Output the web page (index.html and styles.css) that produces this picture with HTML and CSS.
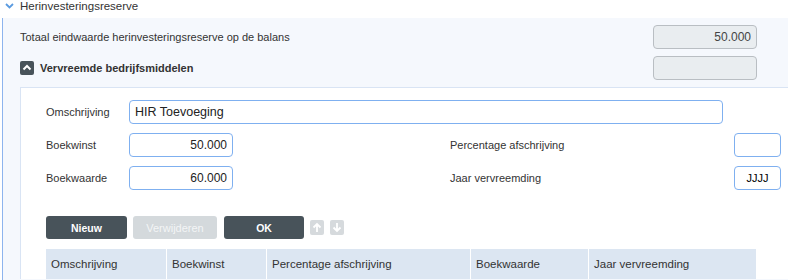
FILE: index.html
```html
<!DOCTYPE html>
<html lang="nl">
  <head>
    <meta charset="UTF-8" />
    <title>Herinvesteringsreserve</title>
    <link rel="stylesheet" href="styles.css">
  </head>
  <body>
    <div class="section-title">
      <svg class="chevron-down" width="9" height="6" viewBox="0 0 9 6">
        <path d="M1 1 L4.5 4.5 L8 1" fill="none" stroke="#5b9be0" stroke-width="1.8" />
      </svg>
      <span>Herinvesteringsreserve</span>
    </div>

    <div class="section-body">
      <div class="sum-row">
        <span class="sum-label">Totaal eindwaarde herinvesteringsreserve op de balans</span>
        <input class="field readonly" type="text" value="50.000" readonly />
      </div>
      <div class="sum-row">
        <span class="sum-label bold">
          <span class="toggle">
            <svg width="14" height="14" viewBox="0 0 14 14">
              <path d="M3.5 8.5 L7 5 L10.5 8.5" fill="none" stroke="#fff" stroke-width="2" />
            </svg>
          </span>
          Vervreemde bedrijfsmiddelen
        </span>
        <input class="field readonly" type="text" value="" readonly />
      </div>

      <div class="panel">
        <div class="form-row">
          <label class="label">Omschrijving</label>
          <input class="field wide" type="text" value="HIR Toevoeging" />
        </div>
        <div class="form-row">
          <div class="half">
            <label class="label">Boekwinst</label>
            <input class="field num" type="text" value="50.000" />
          </div>
          <label class="label right-label">Percentage afschrijving</label>
          <input class="field small" type="text" value="" />
        </div>
        <div class="form-row">
          <div class="half">
            <label class="label">Boekwaarde</label>
            <input class="field num" type="text" value="60.000" />
          </div>
          <label class="label right-label">Jaar vervreemding</label>
          <input class="field small year" type="text" value="JJJJ" />
        </div>

        <div class="buttons">
          <button class="btn btn-new">Nieuw</button>
          <button class="btn btn-delete" disabled>Verwijderen</button>
          <button class="btn btn-ok">OK</button>
          <span class="arrow">
            <svg width="14" height="15" viewBox="0 0 14 15">
              <path d="M7 12 V4 M3.5 7.5 L7 4 L10.5 7.5" fill="none" stroke="#fff" stroke-width="1.8" />
            </svg>
          </span>
          <span class="arrow">
            <svg width="14" height="15" viewBox="0 0 14 15">
              <path d="M7 3 V11 M3.5 7.5 L7 11 L10.5 7.5" fill="none" stroke="#fff" stroke-width="1.8" />
            </svg>
          </span>
        </div>

        <div class="grid-head">
          <div class="cell col-desc">Omschrijving</div>
          <div class="cell col-gain">Boekwinst</div>
          <div class="cell col-pct">Percentage afschrijving</div>
          <div class="cell col-value">Boekwaarde</div>
          <div class="cell col-year">Jaar vervreemding</div>
        </div>
      </div>
    </div>
  </body>
</html>
```

FILE: styles.css
```css
body {
  margin: 0;
  width: 788px;
  height: 280px;
  overflow: hidden;
  font-family: "Liberation Sans", Arial, sans-serif;
  color: #333;
  background: #fff;
}
.section-title {
  height: 18px;
  display: flex;
  align-items: flex-start;
  gap: 6px;
  padding-left: 5px;
  font-size: 11.5px;
  line-height: 13px;
}
.chevron-down {
  margin-top: 3px;
}
.section-body {
  box-sizing: border-box;
  margin-left: 2px;
  border-left: 1px solid #8db4ee;
  background: #f5f8fd;
  padding-top: 7px;
  height: 262px;
}
.sum-row {
  display: flex;
  align-items: center;
  justify-content: space-between;
  padding: 0 31px 0 17px;
  margin-bottom: 7px;
  font-size: 11px;
}
.sum-label {
  display: flex;
  align-items: center;
  gap: 6px;
}
.bold {
  font-weight: bold;
}
.toggle {
  width: 14px;
  height: 14px;
  background: #48535a;
  border-radius: 2px;
  display: flex;
}
.field {
  box-sizing: border-box;
  height: 24px;
  border: 1px solid #7fb0f0;
  border-radius: 4px;
  background: #fff;
  font-family: "Liberation Sans", Arial, sans-serif;
  font-size: 12px;
  color: #222;
  padding: 0 5px;
  outline: none;
}
.field.readonly {
  width: 104px;
  background: #e9edf0;
  border-color: #b9bec3;
  color: #444;
  text-align: right;
}
.panel {
  box-sizing: border-box;
  margin-left: 17px;
  margin-top: 1px;
  border-top: 1px solid #d9e4f4;
  border-left: 1px solid #d9e4f4;
  background: #fff;
  padding: 12px 0 0 25px;
  height: 192px;
}
.form-row {
  display: flex;
  align-items: center;
  margin-bottom: 9px;
}
.half {
  display: flex;
  align-items: center;
  width: 404px;
}
.label {
  width: 83px;
  font-size: 11px;
}
.right-label {
  width: 284px;
}
.field.wide {
  width: 594px;
  font-size: 12.5px;
}
.field.num {
  width: 104px;
  text-align: right;
}
.field.small {
  width: 47px;
}
.field.year {
  text-align: center;
  font-size: 11px;
  color: #000;
}
.buttons {
  display: flex;
  align-items: center;
  margin-top: 26px;
}
.btn {
  height: 23px;
  border: none;
  border-radius: 3px;
  background: #48535a;
  color: #fff;
  font-family: "Liberation Sans", Arial, sans-serif;
  font-size: 10.5px;
  font-weight: bold;
  padding: 0;
}
.btn:disabled {
  background: #d4d9dc;
  color: #f3f5f6;
  font-weight: normal;
  font-size: 11px;
}
.btn-new {
  width: 81px;
}
.btn-delete {
  width: 84px;
  margin-left: 6px;
}
.btn-ok {
  width: 80px;
  margin-left: 7px;
}
.arrow {
  width: 14px;
  height: 15px;
  background: #d6dadd;
  border-radius: 2px;
  display: flex;
  margin-left: 6px;
}
.grid-head {
  display: flex;
  margin-top: 10px;
  width: 710px;
  height: 30px;
  background: #dce6f2;
}
.cell {
  box-sizing: border-box;
  display: flex;
  align-items: center;
  padding-left: 5px;
  border-right: 1px solid #fff;
  font-size: 11.5px;
  color: #333;
}
.col-desc {
  width: 121px;
}
.col-gain {
  width: 100px;
}
.col-pct {
  width: 204px;
}
.col-value {
  width: 118px;
}
.col-year {
  flex: 1;
  border-right: none;
}
```
